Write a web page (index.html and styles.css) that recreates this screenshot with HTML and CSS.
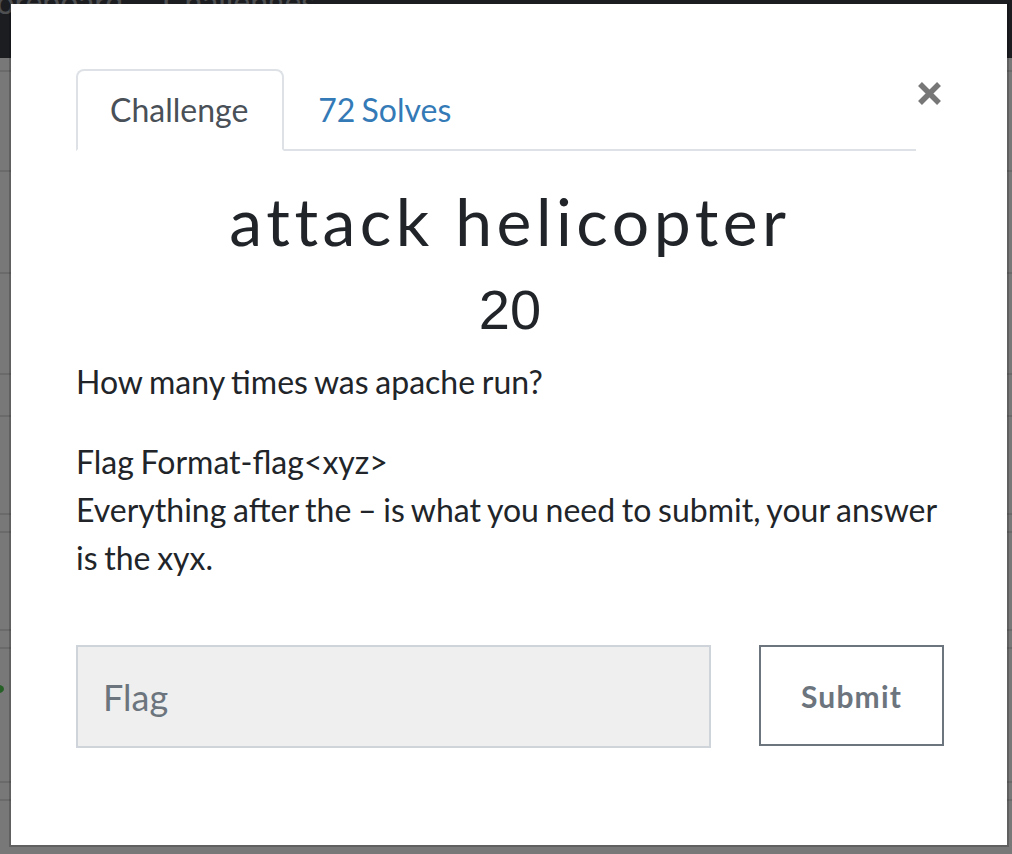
FILE: index.html
```html
<!DOCTYPE html>
<html lang="en">
<head>
<meta charset="utf-8">
<title>attack helicopter</title>
<link rel="stylesheet" href="styles.css">
</head>
<body>
<div class="page">
  <nav class="navbar">
    <a class="nav-item nav-first">Scoreboard</a>
    <a class="nav-item">Challenges</a>
  </nav>
  <div class="rows">
    <div class="row row-12"></div>
    <div class="row row-98"></div>
    <div class="row row-100"></div>
    <div class="row row-99"></div>
    <div class="row row-40"></div>
    <div class="row row-96"></div>
    <div class="row row-16"></div>
    <div class="row row-96"></div>
    <div class="row row-16"></div>
    <div class="row row-96"><span class="solved-dot"></span></div>
    <div class="row row-16"></div>
  </div>
</div>
<div class="backdrop"></div>
<div class="modal">
  <div class="modal-body">
    <div class="tab-row">
      <ul class="tabs">
        <li class="tab active"><a>Challenge</a></li>
        <li class="tab"><a>72 Solves</a></li>
      </ul>
      <button class="close" type="button" aria-label="Close">
        <svg width="23" height="23" viewBox="0 0 23 23"><path d="M2 2L21 21M21 2L2 21" stroke="#777" stroke-width="5.5" fill="none"/></svg>
      </button>
    </div>
    <h3 class="title">attack helicopter</h3>
    <h4 class="value">20</h4>
    <div class="desc">
      <p>How many times was apache run?</p>
      <p>Flag Format-flag&lt;xyz&gt;<br>Everything after the – is what you need to submit, your answer is the xyx.</p>
    </div>
    <form class="submit-row">
      <input class="flag-input" type="text" placeholder="Flag">
      <button class="submit" type="button">Submit</button>
    </form>
  </div>
</div>
</body>
</html>
```
FILE: styles.css
```css
html, body {
  margin: 0;
  padding: 0;
}
body {
  background: #f1f1f1;
  font-family: Lato, "Liberation Sans", sans-serif;
  overflow: hidden;
  height: 854px;
}
.page {
  background: #f1f1f1;
}
.navbar {
  height: 58px;
  background: #383a42;
  display: flex;
  overflow: hidden;
}
.nav-item {
  font: 32px/32px Lato, sans-serif;
  color: #f0f0f2;
  opacity: 0.55;
  margin-top: -14px;
  white-space: nowrap;
}
.nav-first {
  margin-left: -36px;
  width: 199px;
  flex: 0 0 199px;
}
.row {
  border-bottom: 2px solid #d4d4d4;
}
.row-12 { height: 12px; }
.row-98 { height: 98px; }
.row-100 { height: 100px; }
.row-99 { height: 99px; }
.row-40 { height: 40px; }
.row-96 { height: 96px; }
.row-16 { height: 16px; }
.solved-dot {
  display: block;
  width: 10px;
  height: 8px;
  margin: 36px 0 0 -6px;
  background: #4cc04c;
  border-radius: 50%;
}
.backdrop {
  position: fixed;
  inset: 0;
  background: rgba(0, 0, 0, 0.5);
}
.modal {
  position: fixed;
  top: 2px;
  left: 9px;
  width: 1000px;
  height: 845px;
  box-sizing: border-box;
  border: 2px solid rgba(0, 0, 0, 0.2);
  border-top-color: transparent;
  background: #fff;
  background-clip: padding-box;
}
.modal-body {
  padding: 65px 63px 0 65px;
}
.tab-row {
  display: flex;
  justify-content: space-between;
  align-items: flex-start;
}
.tabs {
  width: 840px;
  display: flex;
  list-style: none;
  margin: 0;
  padding: 0;
  border-bottom: 2px solid #dee2e6;
}
.tab {
  margin-bottom: -2px;
}
.tab a {
  display: block;
  padding: 15px 32px;
  border: 2px solid transparent;
  border-radius: 8px 8px 0 0;
  font: 32px/48px Lato, sans-serif;
  word-spacing: -2px;
  color: #337ab7;
}
.tab.active a {
  color: #495057;
  border-color: #dee2e6 #dee2e6 #fff;
  padding-right: 34px;
}
.close {
  margin: 13px 3px 0 0;
  padding: 0;
  width: 23px;
  height: 23px;
  border: 0;
  background: none;
  display: block;
}
.close svg {
  display: block;
}
.title {
  margin: 30px 0 0;
  text-align: center;
  font: 400 66px/1.2 Lato, sans-serif;
  letter-spacing: 4.5px;
  color: #212529;
}
.value {
  margin: 16px 0 0;
  text-align: center;
  font: 400 56px/1.2 "Liberation Sans", Arial, sans-serif;
  color: #212529;
}
.desc {
  margin-top: 15px;
}
.desc p {
  margin: 0 0 32px;
  font: 32px/48px Lato, sans-serif;
  word-spacing: -1.5px;
  color: #212529;
}
.submit-row {
  margin: 63px 0 0;
  display: flex;
  justify-content: space-between;
  align-items: flex-start;
}
.flag-input {
  width: 635px;
  height: 103px;
  box-sizing: border-box;
  border: 2px solid #ced4da;
  background: #efefef;
  padding: 0 25px;
  font: 36px Lato, sans-serif;
  color: #495057;
  outline: none;
  border-radius: 0;
}
.flag-input::placeholder {
  color: #6c757d;
}
.submit {
  width: 185px;
  height: 101px;
  box-sizing: border-box;
  border: 2px solid #6c757d;
  background: #fff;
  color: #6c757d;
  font: 700 30px Lato, sans-serif;
  letter-spacing: 1.2px;
  padding: 0;
  border-radius: 0;
}
```
